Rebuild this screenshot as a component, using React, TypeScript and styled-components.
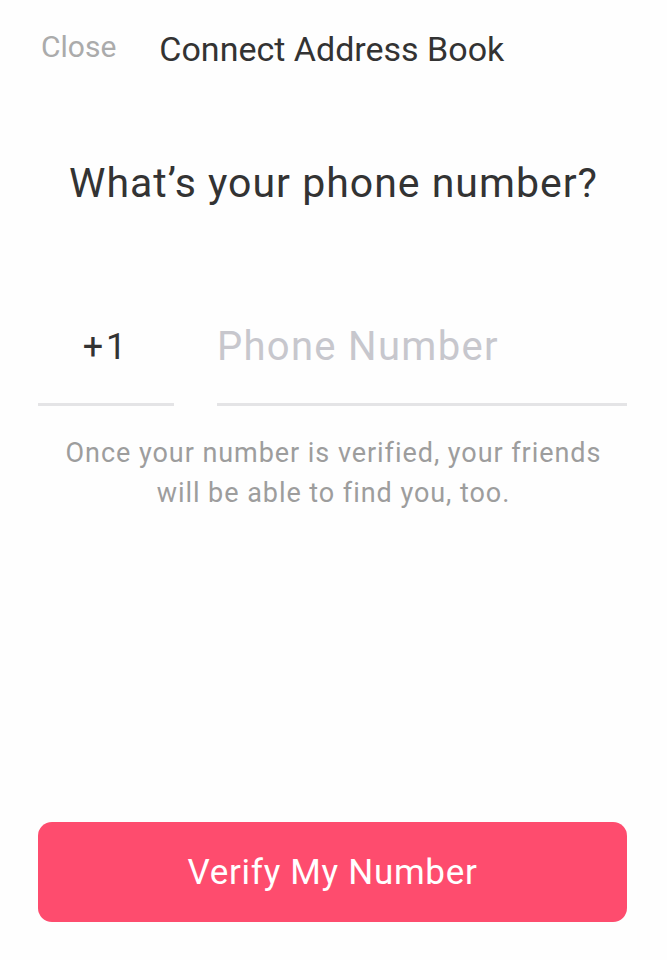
import styled, { createGlobalStyle } from "styled-components";

const Global = createGlobalStyle`
  html, body {
    margin: 0;
    padding: 0;
    background: #fefefe;
  }
  body {
    font-family: Roboto, "Liberation Sans", sans-serif;
  }
`

const Page = styled.div`
  width: 667px;
  height: 960px;
  display: flex;
  flex-direction: column;
  background: #fefefe;
`

const Header = styled.div`
  display: flex;
  align-items: center;
  gap: 43px;
  height: 40px;
  padding: 29px 0 0 41px;
`

const CloseLink = styled.span`
  font-size: 30px;
  line-height: 40px;
  color: #ababab;
  margin-top: -4px;
`

const Title = styled.span`
  font-size: 34px;
  line-height: 40px;
  color: #333;
`

const Question = styled.h1`
  margin: 90px 0 0;
  font-size: 41px;
  line-height: 48px;
  letter-spacing: 1px;
  font-weight: 400;
  color: #333;
  text-align: center;
`

const InputRow = styled.div`
  display: flex;
  gap: 43px;
  padding: 0 40px 0 38px;
  margin-top: 116px;
`

const Field = styled.div<{ $width?: number }>`
  ${(p) => (p.$width ? `width: ${p.$width}px;` : "flex: 1;")}
  border-bottom: 3px solid #e4e4e6;
  padding-bottom: 32px;
  display: flex;
  justify-content: ${(p) => (p.$width ? "center" : "flex-start")};
`

const Prefix = styled.span`
  font-size: 36px;
  line-height: 48px;
  letter-spacing: 3px;
  color: #333;
`

const PhoneInput = styled.input`
  border: none;
  outline: none;
  background: transparent;
  padding: 0;
  width: 100%;
  height: 48px;
  font-family: inherit;
  font-size: 40px;
  line-height: 48px;
  letter-spacing: 1.3px;
  color: #333;

  &::placeholder {
    color: #c7c7cd;
  }
`

const Hint = styled.p`
  margin: 27px 0 0;
  text-align: center;
  font-size: 27px;
  line-height: 40px;
  letter-spacing: 0.95px;
  color: #9d9d9d;
`

const Spacer = styled.div`
  flex: 1;
`

const VerifyButton = styled.button`
  margin: 0 40px 38px 38px;
  height: 100px;
  border: none;
  border-radius: 14px;
  background: #fe4c6e;
  color: #fff;
  font-family: inherit;
  font-size: 35px;
  letter-spacing: 0.7px;
  cursor: pointer;
`

export default function App() {
  return (
    <>
      <Global />
      <Page>
        <Header>
          <CloseLink>Close</CloseLink>
          <Title>Connect Address Book</Title>
        </Header>
        <Question>What’s your phone number?</Question>
        <InputRow>
          <Field $width={136}>
            <Prefix>+1</Prefix>
          </Field>
          <Field>
            <PhoneInput type="tel" placeholder="Phone Number" />
          </Field>
        </InputRow>
        <Hint>
          Once your number is verified, your friends
          <br />
          will be able to find you, too.
        </Hint>
        <Spacer />
        <VerifyButton>Verify My Number</VerifyButton>
      </Page>
    </>
  )
}
